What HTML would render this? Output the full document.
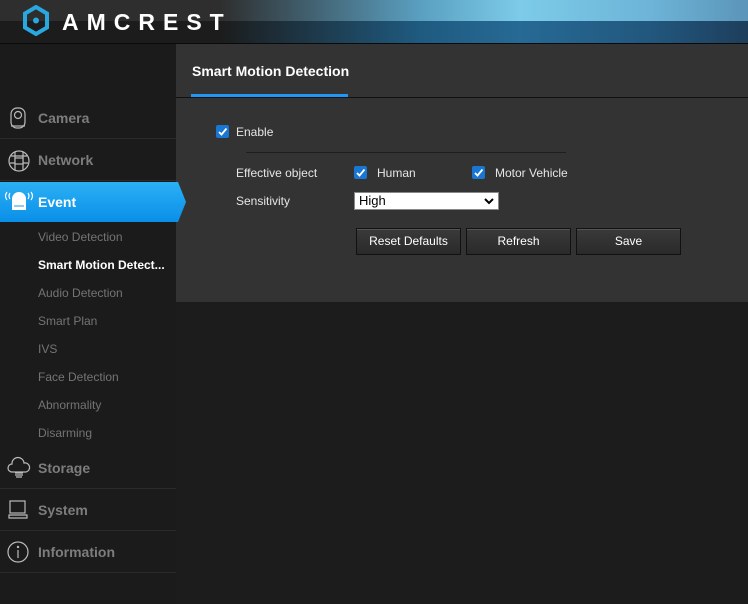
<!DOCTYPE html>
<html><head><meta charset="utf-8"><style>
*{margin:0;padding:0;box-sizing:border-box}
body{width:748px;height:604px;background:#1c1c1c;font-family:"Liberation Sans",Arial,sans-serif;position:relative;overflow:hidden}
.hdr{position:absolute;left:0;top:0;width:748px;height:43px}
.h1{position:absolute;left:0;top:0;width:748px;height:21px;background:linear-gradient(90deg,#2e2e2e 0,#2e2e2e 220px,#5a9fc0 420px,#7ccbe8 520px,#6db4d8 650px,#5b95b8 748px)}
.h2{position:absolute;left:0;top:21px;width:748px;height:22px;background:linear-gradient(90deg,#1c1c1c 0,#1c1c1c 220px,#1f5a80 420px,#266a95 520px,#22577e 650px,#1e3e5c 748px)}
.hline{position:absolute;left:0;top:43px;width:748px;height:1px;background:#0a0a0a}
.logo{position:absolute;left:62px;top:9px;color:#fff;font-size:23px;font-weight:bold;letter-spacing:8px}
.side{position:absolute;left:0;top:44px;width:176px;height:560px;background:#1b1b1b}
.m{position:absolute;left:0;width:176px;height:42px;border-bottom:1px solid #2a2a2a;color:#7d7d7d;font-weight:bold;font-size:14px}
.m span{position:absolute;left:38px;top:13px}
.m svg{position:absolute;left:6px;top:9px}
.ev{position:absolute;left:0;top:182px;width:186px;height:40px;z-index:5}
.sub{position:absolute;left:38px;font-size:12px;color:#747474}
.panel{position:absolute;left:176px;top:44px;width:572px;height:258px;background:#333}
.tabline{position:absolute;left:0;top:53px;width:572px;height:1px;background:#111}
.tab{position:absolute;left:16px;top:19px;color:#fff;font-weight:bold;font-size:14px}
.tabu{position:absolute;left:15px;top:50px;width:157px;height:3px;background:#2196f3}
.cb{position:absolute;width:13px;height:13px;background:#1976d2;border-radius:2px}
.cb svg{position:absolute;left:1px;top:1px}
.t{position:absolute;font-size:12px;color:#e6e6e6}
.sel{position:absolute;left:354px;top:192px;width:145px;height:18px;background:#fff;border:1px solid #888;font-size:13px;color:#000;padding-left:4px;line-height:16px}
.btn{position:absolute;top:228px;width:105px;height:27px;border:1px solid #111;background:linear-gradient(#3a3a3a,#2a2a2a);color:#fff;font-size:12px;text-align:center;line-height:25px;box-shadow:inset 0 1px 0 #555}
</style></head><body>
<div class="hdr"><div class="h1"></div><div class="h2"></div></div>
<div class="hline"></div>
<svg style="position:absolute;left:22px;top:5px" width="28" height="31" viewBox="0 0 28 31"><path d="M14 2 L25 8.5 L25 22.5 L14 29 L3 22.5 L3 8.5 Z" fill="none" stroke="#29a8e0" stroke-width="4"/><circle cx="14" cy="15.5" r="3" fill="#29a8e0"/></svg>
<div class="logo">AMCREST</div>
<div class="side"></div>
<div class="m" style="top:97px"><svg width="24" height="24" viewBox="0 0 24 24" fill="none" stroke="#bbb" stroke-width="1.2"><rect x="5" y="2" width="14" height="20" rx="6"/><circle cx="12" cy="9" r="3.5"/><line x1="5" y1="20" x2="19" y2="20"/></svg><span>Camera</span></div>
<div class="m" style="top:139px"><svg width="26" height="26" viewBox="0 0 26 26" fill="none" stroke="#bbb" stroke-width="1.2"><circle cx="13" cy="13" r="10"/><path d="M5 8h16M4 15h18M9 4v18M17 4v18"/><rect x="9" y="10" width="8" height="6" fill="#1b1b1b"/></svg><span>Network</span></div>
<div class="sub" style="top:230px">Video Detection</div>
<div class="sub" style="top:258px;color:#fff;font-weight:bold">Smart Motion Detect...</div>
<div class="sub" style="top:286px">Audio Detection</div>
<div class="sub" style="top:314px">Smart Plan</div>
<div class="sub" style="top:342px">IVS</div>
<div class="sub" style="top:370px">Face Detection</div>
<div class="sub" style="top:398px">Abnormality</div>
<div class="sub" style="top:426px">Disarming</div>
<div class="m" style="top:447px"><svg width="26" height="24" viewBox="0 0 26 24" fill="none" stroke="#bbb" stroke-width="1.2"><path d="M6 16 a4 4 0 0 1 0-8 a6 6 0 0 1 12-1 a4.5 4.5 0 0 1 2 9 Z"/><path d="M9 17h8M9 19h8M10 21h6"/></svg><span>Storage</span></div>
<div class="m" style="top:489px"><svg width="24" height="24" viewBox="0 0 24 24" fill="none" stroke="#bbb" stroke-width="1.2"><rect x="4" y="3" width="15" height="12"/><path d="M3 17h18v3H3z"/></svg><span>System</span></div>
<div class="m" style="top:531px"><svg width="24" height="24" viewBox="0 0 24 24" fill="none" stroke="#bbb" stroke-width="1.2"><circle cx="12" cy="12" r="10"/><line x1="12" y1="10" x2="12" y2="18"/><circle cx="12" cy="7" r=".6" fill="#bbb"/></svg><span>Information</span></div>
<div class="panel"><div class="tab">Smart Motion Detection</div><div class="tabu"></div><div class="tabline"></div>
<div style="position:absolute;left:70px;top:108px;width:320px;height:1px;background:#1e1e1e"></div></div>
<svg class="ev" viewBox="0 0 186 40"><defs><linearGradient id="g" x1="0" y1="0" x2="0" y2="1"><stop offset="0" stop-color="#2bb0f5"/><stop offset="1" stop-color="#0a8fe8"/></linearGradient></defs><path d="M0 0H178L186 20L178 40H0Z" fill="url(#g)"/><path d="M12 28 V17 a7 7 0 0 1 14 0 V28 Z" fill="#fff"/><line x1="14" y1="24" x2="24" y2="24" stroke="#1a9be8"/><path d="M7 10 q-3 4 0 8 M10 11 q-2 3 0 6 M31 10 q3 4 0 8 M28 11 q2 3 0 6" stroke="#fff" fill="none" stroke-width="1.2"/><text x="38" y="25" fill="#fff" font-family="Liberation Sans" font-weight="bold" font-size="14">Event</text></svg>
<div class="cb" style="left:216px;top:125px"><svg width="11" height="11" viewBox="0 0 11 11"><path d="M2 6l2.5 2.5L9.5 2.5" stroke="#fff" stroke-width="1.8" fill="none"/></svg></div>
<div class="t" style="left:236px;top:125px">Enable</div>
<div class="t" style="left:236px;top:166px">Effective object</div>
<div class="cb" style="left:354px;top:166px"><svg width="11" height="11" viewBox="0 0 11 11"><path d="M2 6l2.5 2.5L9.5 2.5" stroke="#fff" stroke-width="1.8" fill="none"/></svg></div>
<div class="t" style="left:377px;top:166px">Human</div>
<div class="cb" style="left:472px;top:166px"><svg width="11" height="11" viewBox="0 0 11 11"><path d="M2 6l2.5 2.5L9.5 2.5" stroke="#fff" stroke-width="1.8" fill="none"/></svg></div>
<div class="t" style="left:495px;top:166px">Motor Vehicle</div>
<div class="t" style="left:236px;top:194px">Sensitivity</div>
<div class="sel">High<svg style="position:absolute;right:4px;top:5px" width="10" height="7" viewBox="0 0 10 7"><path d="M1 1l4 4 4-4" stroke="#000" stroke-width="2" fill="none"/></svg></div>
<div class="btn" style="left:356px">Reset Defaults</div>
<div class="btn" style="left:466px">Refresh</div>
<div class="btn" style="left:576px">Save</div>
</body></html>
